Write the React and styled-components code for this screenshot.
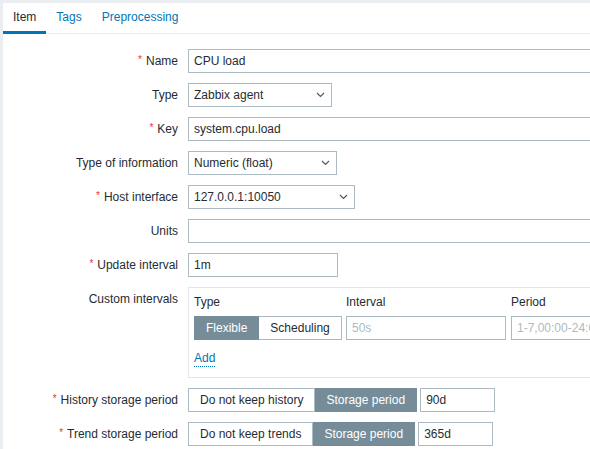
import React from 'react';
import styled, { createGlobalStyle } from 'styled-components';

const GlobalStyle = createGlobalStyle`
  html, body {
    margin: 0;
    padding: 0;
    overflow: hidden;
    background: #ebeef0;
    font-family: "Liberation Sans", Arial, sans-serif;
    font-size: 12px;
    color: #1f2c33;
  }
`;

const Panel = styled.div`
  margin: 3px 0 0 3px;
  width: 760px;
  min-height: 460px;
  background: #fff;
`;

const TabBar = styled.ul`
  display: flex;
  margin: 0;
  padding: 0;
  list-style: none;
  border-bottom: 1px solid #ebeef0;
`;

const Tab = styled.li`
  padding: 7px 10px;
  line-height: 14px;
  margin-bottom: -1px;
  border-bottom: 3px solid ${p => (p.$active ? '#0275b8' : 'transparent')};
  color: ${p => (p.$active ? '#1f2c33' : '#0275b8')};
`;

const Form = styled.div`
  display: grid;
  grid-template-columns: 175px 1fr;
  grid-auto-rows: minmax(24px, auto);
  column-gap: 10px;
  row-gap: 10px;
  padding-top: 15px;
`;

const Label = styled.div`
  text-align: right;
  height: 24px;
  line-height: 24px;
  white-space: nowrap;
`;

const Asterisk = styled.span`
  position: relative;
  top: -2px;
  color: #e33734;
  font-size: 10px;
  line-height: 10px;
  margin-right: 4px;
`;

const Field = styled.div`
  display: flex;
  align-items: center;
  height: 24px;
`;

const TextInput = styled.div`
  box-sizing: border-box;
  width: ${p => p.$w}px;
  height: 24px;
  padding: 0 5px;
  line-height: 22px;
  border: 1px solid #acbbc2;
  background: #fff;
  color: ${p => (p.$placeholder ? '#acbbc2' : '#1f2c33')};
  white-space: nowrap;
  overflow: hidden;
  margin-left: ${p => p.$ml || 0}px;
`;

const SelectBox = styled(TextInput)`
  display: flex;
  align-items: center;
  justify-content: space-between;
  padding-right: 6px;
`;

const Chevron = () => (
  <svg width="9" height="6" viewBox="0 0 9 6">
    <path d="M1 1l3.5 3.5L8 1" fill="none" stroke="#4f5b61" strokeWidth="1.2" />
  </svg>
);

const Select = ({ w, children }) => (
  <SelectBox $w={w}>
    <span>{children}</span>
    <Chevron />
  </SelectBox>
);

const Segmented = styled.div`
  display: flex;
  height: 24px;
`;

const SegButton = styled.div`
  box-sizing: border-box;
  height: 24px;
  line-height: 22px;
  padding: 0 11px;
  white-space: nowrap;
  border: 1px solid ${p => (p.$on ? '#768d99' : '#acbbc2')};
  background: ${p => (p.$on ? '#768d99' : '#fff')};
  color: ${p => (p.$on ? '#fff' : '#1f2c33')};
  & + & {
    border-left: none;
  }
`;

const IntervalBox = styled.div`
  border: 1px solid #e3e7ea;
  padding: 5px 5px 10px;
`;

const IntervalGrid = styled.div`
  display: grid;
  grid-template-columns: 147px 160px 180px;
  column-gap: 5px;
  row-gap: 5px;
`;

const ColHead = styled.div`
  line-height: 18px;
`;

const AddLink = styled.span`
  display: inline-block;
  margin-top: 11px;
  line-height: 15px;
  color: #0275b8;
  border-bottom: 1px dotted #0275b8;
`;

const Req = ({ children }) => (
  <Label>
    <Asterisk>*</Asterisk>
    {children}
  </Label>
);

export default function App() {
  return (
    <>
      <GlobalStyle />
      <Panel>
        <TabBar>
          <Tab $active>Item</Tab>
          <Tab>Tags</Tab>
          <Tab>Preprocessing</Tab>
        </TabBar>
        <Form>
          <Req>Name</Req>
          <Field><TextInput $w={453}>CPU load</TextInput></Field>

          <Label>Type</Label>
          <Field><Select w={144}>Zabbix agent</Select></Field>

          <Req>Key</Req>
          <Field><TextInput $w={453}>system.cpu.load</TextInput></Field>

          <Label>Type of information</Label>
          <Field><Select w={149}>Numeric (float)</Select></Field>

          <Req>Host interface</Req>
          <Field><Select w={167}>127.0.0.1:10050</Select></Field>

          <Label>Units</Label>
          <Field><TextInput $w={453} /></Field>

          <Req>Update interval</Req>
          <Field><TextInput $w={150}>1m</TextInput></Field>

          <Label>Custom intervals</Label>
          <IntervalBox>
            <IntervalGrid>
              <ColHead>Type</ColHead>
              <ColHead>Interval</ColHead>
              <ColHead>Period</ColHead>
              <Segmented>
                <SegButton $on>Flexible</SegButton>
                <SegButton>Scheduling</SegButton>
              </Segmented>
              <TextInput $w={160} $placeholder>50s</TextInput>
              <TextInput $w={180} $placeholder>1-7,00:00-24:00</TextInput>
            </IntervalGrid>
            <AddLink>Add</AddLink>
          </IntervalBox>

          <Req>History storage period</Req>
          <Field>
            <Segmented>
              <SegButton>Do not keep history</SegButton>
              <SegButton $on>Storage period</SegButton>
            </Segmented>
            <TextInput $w={75} $ml={3}>90d</TextInput>
          </Field>

          <Req>Trend storage period</Req>
          <Field>
            <Segmented>
              <SegButton>Do not keep trends</SegButton>
              <SegButton $on>Storage period</SegButton>
            </Segmented>
            <TextInput $w={75} $ml={3}>365d</TextInput>
          </Field>
        </Form>
      </Panel>
    </>
  );
}
